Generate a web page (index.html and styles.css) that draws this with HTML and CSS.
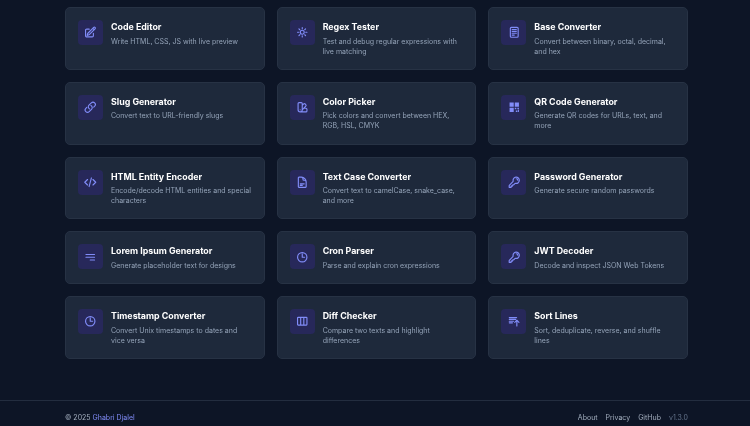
FILE: index.html
```html
<!DOCTYPE html>
<html lang="en">
<head>
<meta charset="utf-8">
<title>Tools</title>
<link rel="stylesheet" href="styles.css">
</head>
<body>
<main class="tools">
<a class="card"><span class="ico"><svg viewBox="0 0 24 24"><path d="M16.862 4.487l1.687-1.688a1.875 1.875 0 1 1 2.652 2.652L10.582 16.07a4.5 4.5 0 0 1-1.897 1.13L6 18l.8-2.685a4.5 4.5 0 0 1 1.13-1.897l8.932-8.931zm0 0L19.5 7.125M18 14v4.75A2.25 2.25 0 0 1 15.75 21H5.25A2.25 2.25 0 0 1 3 18.75V8.25A2.25 2.25 0 0 1 5.25 6H10"/></svg></span><div class="txt"><h3>Code Editor</h3><p>Write HTML, CSS, JS with live preview</p></div></a>
<a class="card"><span class="ico"><svg viewBox="0 0 24 24"><path d="M12 3v2.25m6.364.386l-1.591 1.591M21 12h-2.25m-.386 6.364l-1.591-1.591M12 18.75V21m-4.773-4.227l-1.591 1.591M5.25 12H3m4.227-4.773L5.636 5.636M15.75 12a3.75 3.75 0 1 1-7.5 0 3.75 3.75 0 0 1 7.5 0z"/></svg></span><div class="txt"><h3>Regex Tester</h3><p>Test and debug regular expressions with live matching</p></div></a>
<a class="card"><span class="ico"><svg viewBox="0 0 24 24"><path d="M8 7h8M8 10.5h8M8 14h8M8 17.5h4M6.500 2.500h11a2 2 0 0 1 2 2v15a2 2 0 0 1-2 2h-11a2 2 0 0 1-2-2v-15a2 2 0 0 1 2-2z"/></svg></span><div class="txt"><h3>Base Converter</h3><p>Convert between binary, octal, decimal, and hex</p></div></a>
<a class="card"><span class="ico"><svg viewBox="0 0 24 24"><path d="M13.19 8.688a4.5 4.5 0 0 1 1.242 7.244l-4.5 4.5a4.5 4.5 0 0 1-6.364-6.364l1.757-1.757m13.35-.622l1.757-1.757a4.5 4.5 0 0 0-6.364-6.364l-4.5 4.5a4.5 4.5 0 0 0 1.242 7.244"/></svg></span><div class="txt"><h3>Slug Generator</h3><p>Convert text to URL-friendly slugs</p></div></a>
<a class="card"><span class="ico"><svg viewBox="0 0 24 24"><path d="M4 5a2 2 0 0 1 2-2h4a2 2 0 0 1 2 2v12a4 4 0 0 1-8 0V5zM12 8.5l2.8-2.8a2 2 0 0 1 2.8 0l1.2 1.2a2 2 0 0 1 0 2.8L12 17M8 21h11a2 2 0 0 0 2-2v-3a2 2 0 0 0-2-2h-2.5M8 17h.01"/></svg></span><div class="txt"><h3>Color Picker</h3><p>Pick colors and convert between HEX, RGB, HSL, CMYK</p></div></a>
<a class="card"><span class="ico"><svg class="solid" viewBox="0 0 24 24"><path d="M3 3h8v8H3zM13 3h8v8h-8zM3 13h8v8H3zM13 13h3v3h-3zM18 13h3v3h-3zM15 18h3v3h-3zM19 17h2v4h-2z"/></svg></span><div class="txt"><h3>QR Code Generator</h3><p>Generate QR codes for URLs, text, and more</p></div></a>
<a class="card"><span class="ico"><svg viewBox="0 0 24 24"><path d="M17.25 6.750L22.500 12l-5.250 5.250m-10.500 0L1.500 12l5.250-5.250m7.500-3l-4.500 16.500"/></svg></span><div class="txt"><h3>HTML Entity Encoder</h3><p>Encode/decode HTML entities and special characters</p></div></a>
<a class="card"><span class="ico"><svg viewBox="0 0 24 24"><path d="M19.5 14.25v-2.625a3.375 3.375 0 0 0-3.375-3.375h-1.5A1.125 1.125 0 0 1 13.5 7.125v-1.5a3.375 3.375 0 0 0-3.375-3.375H8.25m0 12.75h7.5m-7.5 3H12M10.5 2.25H5.625c-.621 0-1.125.504-1.125 1.125v17.25c0 .621.504 1.125 1.125 1.125h12.75c.621 0 1.125-.504 1.125-1.125V11.25a9 9 0 0 0-9-9z"/></svg></span><div class="txt"><h3>Text Case Converter</h3><p>Convert text to camelCase, snake_case, and more</p></div></a>
<a class="card"><span class="ico"><svg viewBox="0 0 24 24"><path d="M15.75 5.25a3 3 0 0 1 3 3m3 0a6 6 0 0 1-7.029 5.912c-.563-.097-1.159.026-1.563.43L10.5 17.25H8.25v2.25H6v2.25H2.25v-2.818c0-.597.237-1.17.659-1.591l6.499-6.499c.404-.404.527-1 .43-1.563A6 6 0 1 1 21.75 8.25z"/></svg></span><div class="txt"><h3>Password Generator</h3><p>Generate secure random passwords</p></div></a>
<a class="card"><span class="ico"><svg viewBox="0 0 24 24"><path d="M3.750 6.750h16.500M3.750 12h16.500M12 17.250h8.250"/></svg></span><div class="txt"><h3>Lorem Ipsum Generator</h3><p>Generate placeholder text for designs</p></div></a>
<a class="card"><span class="ico"><svg viewBox="0 0 24 24"><path d="M12 6v6h4.500m4.500 0a9 9 0 1 1-18 0 9 9 0 0 1 18 0z"/></svg></span><div class="txt"><h3>Cron Parser</h3><p>Parse and explain cron expressions</p></div></a>
<a class="card"><span class="ico"><svg viewBox="0 0 24 24"><path d="M15.75 5.25a3 3 0 0 1 3 3m3 0a6 6 0 0 1-7.029 5.912c-.563-.097-1.159.026-1.563.43L10.5 17.25H8.25v2.25H6v2.25H2.25v-2.818c0-.597.237-1.17.659-1.591l6.499-6.499c.404-.404.527-1 .43-1.563A6 6 0 1 1 21.75 8.25z"/></svg></span><div class="txt"><h3>JWT Decoder</h3><p>Decode and inspect JSON Web Tokens</p></div></a>
<a class="card"><span class="ico"><svg viewBox="0 0 24 24"><path d="M12 6v6h4.500m4.500 0a9 9 0 1 1-18 0 9 9 0 0 1 18 0z"/></svg></span><div class="txt"><h3>Timestamp Converter</h3><p>Convert Unix timestamps to dates and vice versa</p></div></a>
<a class="card"><span class="ico"><svg viewBox="0 0 24 24"><path d="M9 4.500v15m6-15v15M4.125 19.500h15.750c.621 0 1.125-.504 1.125-1.125V5.625c0-.621-.504-1.125-1.125-1.125H4.125C3.504 4.500 3 5.004 3 5.625v12.750c0 .621.504 1.125 1.125 1.125z"/></svg></span><div class="txt"><h3>Diff Checker</h3><p>Compare two texts and highlight differences</p></div></a>
<a class="card"><span class="ico"><svg viewBox="0 0 24 24"><path d="M2.500 5h14M2.500 8.500h12M2.500 12h8M2.500 15h6M17 21V10m0 0l-4 4M17 10l4 4"/></svg></span><div class="txt"><h3>Sort Lines</h3><p>Sort, deduplicate, reverse, and shuffle lines</p></div></a>
</main>
<footer class="foot">
<div class="copy">© 2025 <a class="author">Ghabri Djalel</a></div>
<nav class="links"><a>About</a><a>Privacy</a><a>GitHub</a><span class="ver">v1.3.0</span></nav>
</footer>
</body>
</html>
```
FILE: styles.css
```css
* { box-sizing: border-box; }
html, body { margin: 0; height: 426px; overflow: hidden; }
body {
  background: #0d1526;
  font-family: Inter, "Liberation Sans", sans-serif;
  padding-top: 7px;
}
.tools {
  display: grid;
  grid-template-columns: repeat(3, 1fr);
  gap: 12px;
  margin: 0 62px 0 65px;
  filter: blur(0.25px);
}
.card {
  display: flex;
  gap: 8px;
  padding: 12px;
  background: #1e293b;
  border: 1px solid #273244;
  border-radius: 5px;
}
.ico {
  flex: none;
  width: 25px;
  height: 25px;
  display: flex;
  align-items: center;
  justify-content: center;
  background: #27285a;
  border-radius: 4px;
}
.ico svg {
  width: 12.5px;
  height: 12.5px;
  fill: none;
  stroke: #818cf8;
  stroke-width: 2.2;
  stroke-linecap: round;
  stroke-linejoin: round;
}
.ico svg.solid { fill: #818cf8; stroke: none; }
.txt { min-width: 0; }
h3 {
  margin: 0 0 3.5px;
  font-size: 8.85px;
  line-height: 13px;
  font-weight: 700;
  color: #fff;
}
p {
  margin: 0;
  font-size: 7px;
  line-height: 10.15px;
  color: #94a3b8;
}
.foot {
  margin-top: 41px;
  padding: 12px 62px 0 65px;
  border-top: 1px solid #232d3f;
  display: flex;
  justify-content: space-between;
  align-items: center;
  font-size: 7px;
  line-height: 10.4px;
  color: #a3aebe;
  filter: blur(0.2px);
}
.author { color: #818cf8; }
.links { display: flex; gap: 8px; }
.ver { color: #64748b; }
```
